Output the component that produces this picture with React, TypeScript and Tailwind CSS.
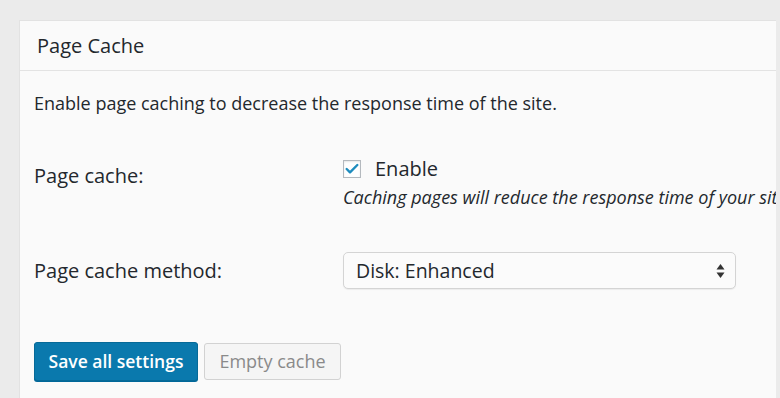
import { Check } from "lucide-react";

export default function App() {
  return (
    <div className="w-[780px] h-[398px] overflow-hidden bg-[#ebebeb] pt-[20px] pl-[19px] font-['Open_Sans',sans-serif] text-[#23282d]">
      <div className="w-[757px] h-[378px] overflow-hidden bg-[#fafafa] border-l border-t border-[#e2e2e2]">
        <div className="h-[50px] border-b border-[#e3e3e3] pl-[17px] flex items-center">
          <h2 className="text-[20px] leading-none">Page Cache</h2>
        </div>

        <div className="pl-[14px]">
          <p className="mt-[20px] text-[18px] leading-[24px]">
            Enable page caching to decrease the response time of the site.
          </p>

          <div className="mt-[40px] flex">
            <div className="w-[309px] shrink-0 pt-[7px] text-[20px] leading-[28px]">Page cache:</div>
            <div className="flex flex-col whitespace-nowrap">
              <label className="flex items-center gap-[14px] text-[20px] leading-[28px]">
                <span className="w-[18px] h-[18px] border border-[#b4b9be] bg-white flex items-center justify-center shadow-[inset_0_1px_2px_rgba(0,0,0,0.1)]">
                  <Check size={18} strokeWidth={3.6} className="text-[#1e8cbe]" />
                </span>
                Enable
              </label>
              <span className="text-[18px] italic leading-[28px]">
                Caching pages will reduce the response time of your site
              </span>
            </div>
          </div>

          <div className="mt-[41px] flex items-center">
            <div className="w-[309px] shrink-0 text-[20px] leading-[28px]">Page cache method:</div>
            <div className="w-[393px] h-[37px] rounded-[5px] border border-[#d4d4d4] bg-[#fbfbfb] shadow-[0_1px_1px_rgba(0,0,0,0.06)] flex items-center justify-between pl-[12px] pr-[10px]">
              <span className="text-[19.5px] leading-none">Disk: Enhanced</span>
              <svg width="9" height="16" viewBox="0 0 9 16" className="text-[#333]">
                <path d="M4.5 1 L8.5 6.5 H0.5 Z" fill="currentColor" />
                <path d="M4.5 15 L8.5 9.5 H0.5 Z" fill="currentColor" />
              </svg>
            </div>
          </div>

          <div className="mt-[53px] flex gap-[6px]">
            <button className="w-[164px] h-[39px] rounded-[3px] bg-[#0a79ad] border border-[#066a98] text-white text-[17.5px] font-semibold shadow-[0_1px_0_#006799]">
              Save all settings
            </button>
            <button className="w-[137px] h-[37px] mt-[1px] rounded-[3px] bg-[#f5f5f5] border border-[#d2d2d2] text-[#8a8a8a] text-[18px]">
              Empty cache
            </button>
          </div>
        </div>
      </div>
    </div>
  );
}
